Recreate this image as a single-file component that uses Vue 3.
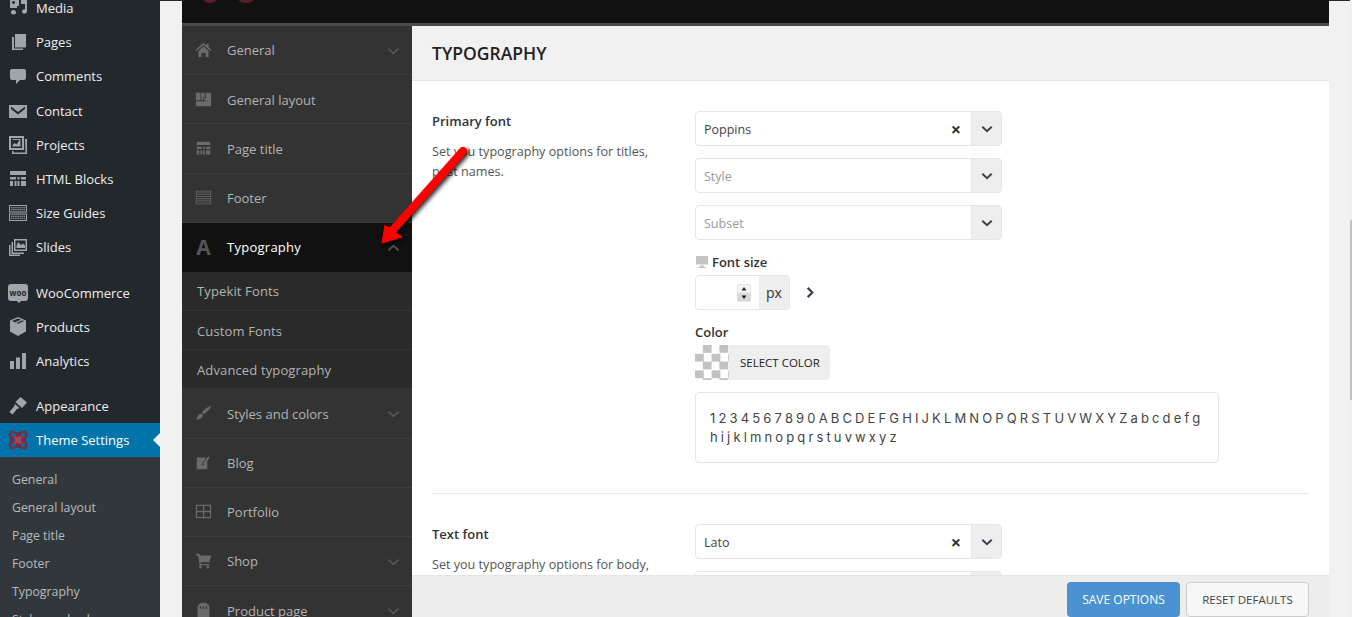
<script setup>
function keys(x, y, n, w, h, gap) {
  let s = ''
  for (let i = 0; i < n; i++) s += `M${x + i * (w + gap)} ${y}h${w}v${h}h-${w}z `
  return s
}
const kb =
  'M1 2h18v7.500H1z M2 3v5.500h16V3z M1 10.500h18V18H1z M2 11.500V17h16v-5.500z ' +
  keys(3, 4.2, 7, 1.500, 1, .6) + keys(3, 6.2, 7, 1.500, 1, .6) +
  keys(3, 12.700, 7, 1.500, 1, .6) + keys(3, 14.700, 7, 1.500, 1, .6)

const blocks = 'M2 2h16v4H2z M2 8h6v2.500H2z M9.500 8h2v2.500h-2z M13 8h5v2.500h-5z M2 12h3v5H2z M6.500 12h2v5h-2z M9.500 12h2v5h-2z M13 12h5v5h-5z'

const wpGroups = [
  [
    { t: 'Media', d: 'M2 1h9v7H9v2H2z M5.500 3a1.500 1.500 0 1 0 .01 0z M13 2h6v11.500a2.500 2.200 0 1 1-2-2.100V6h-4z M5.500 12a2.600 2.300 0 1 1-.01 0z' },
    { t: 'Pages', d: 'M7 2h11v13.500H7z M4 5h2v11.500h9V18H4z' },
    { t: 'Comments', d: 'M4 3h12a2 2 0 0 1 2 2v7a2 2 0 0 1-2 2h-4l-4 4v-4H4a2 2 0 0 1-2-2V5a2 2 0 0 1 2-2z' },
    { t: 'Contact', d: 'M1 4h18v13H1z M3 5.500v2.400l7 5.600 7-5.600V5.500l-7 5.600z' },
    { t: 'Projects', d: 'M1 1h15v14H1z M3 3v10h11V3z M4.500 4h8v7.500h-8v-1.500l2-2 2 1.500 3-4.500h-7z M17 4h2v15H4v-3h1.500v1.500h12z' },
    { t: 'HTML Blocks', d: blocks },
    { t: 'Size Guides', d: kb },
    { t: 'Slides', d: 'M6 2h13v12H6z M7.500 3.500v9h10v-9z M10 5l3 3 2-1.500 2 2v2.500H8.500v-2z M3.500 5H5v10.500h11V17H3.500z M1 8h1.500v9.500H12V19H1z' }
  ],
  [
    { t: 'WooCommerce', woo: true },
    { t: 'Products', d: 'M10 0l8 3.500v11L10 19l-8-4.500v-11z M4 4l6 2.800L16 4l-1.500-.7-6 2.800L7 5.300l6-2.600L10 1.500z' },
    { t: 'Analytics', d: 'M2 10h4v8H2z M8 6.500h4V18H8z M14 2h4v16h-4z' }
  ],
  [
    { t: 'Appearance', d: 'M12.500 1 19 6.500 14 12 7.500 6z M7 8l4.500 4-2.500 1-4.500 5.500L1.500 16 6 10.500z' }
  ]
]

const subMenu = ['General', 'General layout', 'Page title', 'Footer', 'Typography', 'Styles and colors']

const navTop = [
  { t: 'General', chev: true, d: 'M10 1l3.500 3V2h2.500v4.300L20 10h-2.500L10 3.500 2.500 10H0z M4 10.500L10 5l6 5.500V18h-3.500v-5h-5v5H4z' },
  { t: 'General layout', d: 'M1 2h5.500v9H1z M7.500 2h4v5.500H9.500v3.500h-2z M12.500 2H19v16H1v-6h11.500z M10.500 8.500h2V11h-2z' },
  { t: 'Page title', d: blocks },
  { t: 'Footer', d: kb }
]
const navBottom = [
  { t: 'Styles and colors', chev: true, d: 'M19 1c-1 3.500-5 8-8.500 10L8 8.800C10.500 5.500 15.500 2 19 1z M7 10l2.500 2.200C9 15.500 6 17.500 1 17c2-1.200 1.500-5.500 6-7z' },
  { t: 'Blog', d: 'M2 4h11L8.500 11v2H11l3.500-5v10H2z M15.500 2.500l2 1.400-6.500 9-2-1.300z' },
  { t: 'Portfolio', d: 'M1 2h18v16H1z M2.500 3.500v5.700h6.700V3.500z M10.800 3.500v5.700h6.700V3.500z M2.500 10.800v5.700h6.700v-5.700z M10.800 10.800v5.700h6.700v-5.700z' },
  { t: 'Shop', chev: true, d: 'M1 2h4l1 2h13l-2 8H6.500l.5 2h10v1.500H5.500L3.500 4H1z M6.500 16a1.700 1.700 0 1 1-.01 0z M15 16a1.700 1.700 0 1 1-.01 0z' },
  { t: 'Product page', chev: true, d: 'M3 18V6.500C3 3.500 6 1 10 1s7 2.500 7 5.500V18z M6.500 5a.8.8 0 0 0-.8.8V8h1.600V5.800A.8.8 0 0 0 6.500 5z M10 5a.8.8 0 0 0-.8.8V8h1.600V5.800A.8.8 0 0 0 10 5z M13.500 5a.8.8 0 0 0-.8.8V8h1.600V5.800a.8.8 0 0 0-.8-.8z' }
]
const typoSub = ['Typekit Fonts', 'Custom Fonts', 'Advanced typography']
</script>

<template>
  <div class="page">
    <aside class="wp">
      <div v-for="(g, i) in wpGroups" :key="i" class="wp-group">
        <div v-for="it in g" :key="it.t" class="wp-item">
          <span v-if="it.woo" class="woo">woo</span>
          <svg v-else class="wp-ico" viewBox="0 0 20 20"><path fill-rule="evenodd" :d="it.d" /></svg>
          <span>{{ it.t }}</span>
        </div>
      </div>
      <div class="wp-item active">
        <svg class="wp-ico" viewBox="0 0 20 20">
          <g fill="none">
            <ellipse cx="10" cy="10" rx="10.500" ry="4.500" transform="rotate(45 10 10)" stroke="#7c2a3e" stroke-width="2.400" />
            <ellipse cx="10" cy="10" rx="10.500" ry="4.500" transform="rotate(-45 10 10)" stroke="#7c2a3e" stroke-width="2.400" />
          </g>
          <path d="M6.500 6.500 13.500 13.500M13.500 6.500 6.500 13.500" stroke="#c0394a" stroke-width="2.600" />
        </svg>
        <span>Theme Settings</span>
        <i class="notch"></i>
      </div>
      <div class="wp-sub">
        <div v-for="s in subMenu" :key="s" class="wp-sub-item">{{ s }}</div>
      </div>
    </aside>

    <div class="canvas">
      <div class="adminline"></div>
      <div class="panel">
        <div class="panel-top">
          <svg class="logos" width="60" height="3" viewBox="0 0 60 3">
            <path d="M1 0a6 3 0 0 0 12 0z M36 0a7 3 0 0 0 14 0z" fill="#5c1c28" />
          </svg>
        </div>
        <div class="panel-body">
          <nav class="nav">
            <div v-for="n in navTop" :key="n.t" class="nav-row">
              <svg class="nav-ico" viewBox="0 0 20 20"><path fill-rule="evenodd" :d="n.d" /></svg>
              <span>{{ n.t }}</span>
              <svg v-if="n.chev" class="nav-chev" viewBox="0 0 14 8"><path d="M1.500 1.500 7 6.500l5.500-5" /></svg>
            </div>
            <div class="nav-row open">
              <span class="nav-a">A</span>
              <span>Typography</span>
              <svg class="nav-chev" viewBox="0 0 14 8"><path d="M1.500 6.500 7 1.500l5.500 5" /></svg>
            </div>
            <div v-for="s in typoSub" :key="s" class="nav-sub">{{ s }}</div>
            <div v-for="n in navBottom" :key="n.t" class="nav-row">
              <svg class="nav-ico" viewBox="0 0 20 20"><path fill-rule="evenodd" :d="n.d" /></svg>
              <span>{{ n.t }}</span>
              <svg v-if="n.chev" class="nav-chev" viewBox="0 0 14 8"><path d="M1.500 1.500 7 6.500l5.500-5" /></svg>
            </div>
          </nav>

          <main class="main">
            <header class="main-head">Typography</header>
            <div class="scroll">
              <section class="field first">
                <div class="desc">
                  <h4>Primary font</h4>
                  <p>Set you typography options for titles, post names.</p>
                </div>
                <div class="controls">
                  <div class="select">
                    <span class="val">Poppins</span>
                    <span class="clear">×</span>
                    <span class="arrow"><svg viewBox="0 0 14 8"><path d="M1.500 1.500 7 6.500l5.500-5" /></svg></span>
                  </div>
                  <div class="select">
                    <span class="val ph">Style</span>
                    <span class="arrow"><svg viewBox="0 0 14 8"><path d="M1.500 1.500 7 6.500l5.500-5" /></svg></span>
                  </div>
                  <div class="select">
                    <span class="val ph">Subset</span>
                    <span class="arrow"><svg viewBox="0 0 14 8"><path d="M1.500 1.500 7 6.500l5.500-5" /></svg></span>
                  </div>
                  <div class="lbl size-lbl">
                    <svg class="mon" viewBox="0 0 14 14"><path d="M1 1h12v8.500H1z M5 10.500h4V12h2v1H3v-1h2z" fill="#c4c4c4" /></svg>
                    Font size
                  </div>
                  <div class="size-row">
                    <div class="num">
                      <span class="spin">
                        <svg viewBox="0 0 14 18">
                          <rect width="14" height="18" fill="#e4e4e4" />
                          <rect x="1" y="1" width="12" height="7.500" fill="#f4f4f4" />
                          <rect x="1" y="9.500" width="12" height="7.500" fill="#d6d6d6" />
                          <path d="M7 3l2.500 3.500h-5zM7 15l-2.500-3.500h5z" fill="#222" />
                        </svg>
                      </span>
                      <span class="px">px</span>
                    </div>
                    <svg class="more" viewBox="0 0 8 14"><path d="M1.500 2 6.500 7l-5 5" /></svg>
                  </div>
                  <div class="lbl color-lbl">Color</div>
                  <div class="color-btn"><span class="checker"></span><span class="color-t">SELECT COLOR</span></div>
                  <div class="preview">1 2 3 4 5 6 7 8 9 0 A B C D E F G H I J K L M N O P Q R S T U V W X Y Z a b c d e f g h i j k l m n o p q r s t u v w x y z</div>
                </div>
              </section>
              <section class="field">
                <div class="desc">
                  <h4>Text font</h4>
                  <p>Set you typography options for body, paragraphs.</p>
                </div>
                <div class="controls">
                  <div class="select">
                    <span class="val">Lato</span>
                    <span class="clear">×</span>
                    <span class="arrow"><svg viewBox="0 0 14 8"><path d="M1.500 1.500 7 6.500l5.500-5" /></svg></span>
                  </div>
                  <div class="select">
                    <span class="val ph">Style</span>
                    <span class="arrow"><svg viewBox="0 0 14 8"><path d="M1.500 1.500 7 6.500l5.500-5" /></svg></span>
                  </div>
                </div>
              </section>
            </div>
            <footer class="foot">
              <button class="btn save">SAVE OPTIONS</button>
              <button class="btn reset">RESET DEFAULTS</button>
            </footer>
          </main>
        </div>
      </div>
      <svg class="red-arrow" width="110" height="120" viewBox="370 135 110 120">
        <path d="M463 151 391 232" stroke="#f00" stroke-width="8" stroke-linecap="round" fill="none" />
        <path d="M382 243l3-18 17 12z" fill="#f00" stroke="#f00" stroke-linejoin="round" />
      </svg>
    </div>
    <div class="sb"><i></i></div>
  </div>
</template>

<style>
html, body { margin: 0; overflow: hidden; background: #f1f1f1; }
</style>

<style scoped>
.page {
  display: flex;
  width: 1352px;
  height: 617px;
  overflow: hidden;
  background: #f1f1f1;
  font-family: "Open Sans", "Noto Sans", sans-serif;
  font-size: 13px;
  color: #444;
}
.wp {
  flex: 0 0 160px;
  background: #23282d;
  color: #eee;
  margin-top: -9px;
  height: 626px;
  overflow: hidden;
}
.wp-group { padding-bottom: 11px; }
.wp-group:nth-of-type(3) { padding-bottom: 0; }
.wp-item {
  position: relative;
  display: flex;
  align-items: center;
  height: 34.200px;
  padding-left: 8px;
  gap: 8px;
  font-size: 13px;
}
.wp-ico { width: 20px; height: 20px; fill: #a0a5aa; flex: none; }
.woo {
  position: relative;
  width: 20px;
  height: 17px;
  border-radius: 3px;
  background: #a0a5aa;
  color: #23282d;
  font-size: 8px;
  font-weight: 700;
  text-align: center;
  line-height: 17px;
  flex: none;
}
.woo::after {
  content: "";
  position: absolute;
  left: 9px;
  top: 17px;
  border: 2px solid transparent;
  border-top-color: #a0a5aa;
}
.active { background: #0073aa; color: #fff; }
.notch {
  position: absolute;
  right: 0;
  top: 10px;
  border: 7px solid transparent;
  border-left-width: 0;
  border-right-color: #f1f1f1;
  width: 0;
  height: 0;
}
.wp-sub { background: #32373c; padding-top: 9px; height: 200px; }
.wp-sub-item {
  height: 28px;
  line-height: 28px;
  padding-left: 12px;
  font-size: 12.300px;
  color: rgba(240, 245, 250, .7);
}

.canvas { position: relative; flex: 1; padding: 0 21px 0 22px; min-width: 0; }
.adminline { position: absolute; left: 0; right: 0; top: 0; height: 1px; background: #23282d; }
.panel { width: 1147px; height: 617px; display: flex; flex-direction: column; }
.panel-top {
  height: 23px;
  background: #111;
  border-bottom: 3px solid #4a4a4a;
  flex: none;
  position: relative;
}
.logos { position: absolute; left: 21px; top: 0; }
.panel-body { display: flex; flex: 1; min-height: 0; }
.nav { flex: 0 0 230px; background: #333; overflow: hidden; color: #b4b4b4; font-size: 13px; }
.nav-row {
  display: flex;
  align-items: center;
  height: 48.200px;
  border-bottom: 1px solid #3d3d3d;
  padding-left: 13px;
  position: relative;
}
.nav-row > span:not(.nav-a) { margin-left: 15px; padding-top: 1px; }
.nav-row:first-child > span { padding-top: 0; }
.nav-ico { width: 17px; height: 17px; fill: #6a6a6a; flex: none; }
.nav-a { width: 17px; font-size: 21px; font-weight: 700; color: #555; text-align: center; flex: none; line-height: 1; }
.nav-chev {
  position: absolute;
  right: 12px;
  top: 21px;
  width: 13px;
  height: 8px;
  fill: none;
  stroke: #555;
  stroke-width: 2;
}
.open { background: #111; color: #fff; border-bottom: 0; height: 49px; }
.open > span:not(.nav-a) { padding-top: 0; letter-spacing: .02em; }
.nav-sub {
  height: 38.200px;
  line-height: 40px;
  padding-left: 15px;
  background: #2a2a2a;
  border-bottom: 1px solid #333;
  color: #b4b4b4;
  letter-spacing: .01em;
}
.open + .nav-sub { line-height: 38px; }

.main { flex: 1; display: flex; flex-direction: column; background: #fff; min-width: 0; }
.main-head {
  flex: none;
  height: 54px;
  line-height: 54px;
  padding-left: 20px;
  background: #f1f1f1;
  border-bottom: 1px solid #e5e5e5;
  font-size: 17.500px;
  font-weight: 600;
  text-transform: uppercase;
  color: #222;
}
.scroll { flex: 1; min-height: 0; overflow: hidden; padding: 0 21px 0 20px; }
.field { display: flex; padding-top: 30px; }
.first { padding-bottom: 30px; border-bottom: 1px solid #e6e6e6; }
.desc { flex: 0 0 263px; }
.desc h4 { margin: 0; font-size: 13px; font-weight: 600; color: #333; line-height: 20px; }
.desc p { margin: 11px 0 0; width: 225px; font-size: 12.600px; line-height: 20px; color: #555; }
.controls { flex: 1; }
.select {
  display: flex;
  align-items: center;
  box-sizing: border-box;
  width: 307px;
  height: 35px;
  margin-bottom: 12px;
  border: 1px solid #e6e6e6;
  border-radius: 4px;
  padding-left: 8px;
  color: #444;
  font-size: 12.500px;
}
.val { flex: 1; padding-top: 2px; }
.ph { color: #999; }
.clear { font-size: 18px; font-weight: 700; color: #333; margin-right: 10px; line-height: 1; }
.arrow {
  display: flex;
  align-items: center;
  justify-content: center;
  align-self: stretch;
  width: 29px;
  background: #eee;
  border-left: 1px solid #e6e6e6;
}
.arrow svg { width: 12px; height: 8px; fill: none; stroke: #3c434a; stroke-width: 2.400; }
.lbl { font-size: 13px; font-weight: 600; color: #333; line-height: 18px; }
.size-lbl { display: flex; align-items: center; gap: 3px; padding-top: 1px; }
.mon { width: 14px; height: 14px; }
.size-row { display: flex; align-items: center; margin-top: 4px; }
.num {
  box-sizing: border-box;
  display: flex;
  width: 95px;
  height: 35px;
  border: 1px solid #e6e6e6;
  border-radius: 4px;
  overflow: hidden;
  justify-content: flex-end;
  align-items: center;
}
.spin { display: flex; margin-right: 8px; }
.spin svg { width: 14px; height: 18px; }
.px {
  align-self: stretch;
  display: flex;
  align-items: center;
  justify-content: center;
  width: 30px;
  background: #eee;
  font-size: 14px;
  color: #333;
}
.more { width: 8px; height: 13px; margin-left: 16px; fill: none; stroke: #3c434a; stroke-width: 2.400; }
.color-lbl { margin-top: 13px; }
.color-btn {
  display: flex;
  align-items: center;
  width: 135px;
  height: 35px;
  margin-top: 4px;
  border-radius: 4px;
  background: #eee;
  overflow: hidden;
}
.checker {
  width: 34px;
  align-self: stretch;
  background: repeating-conic-gradient(#c2c2c2 0 25%, #fff 0 50%) 0 0 / 16.600px 16.600px;
}
.color-t { margin-left: 11px; font-size: 11.500px; color: #222; }
.preview {
  box-sizing: border-box;
  width: 524px;
  height: 71px;
  margin-top: 12px;
  padding: 16px 14px;
  border: 1px solid #e6e6e6;
  border-radius: 4px;
  font-family: Inter, sans-serif;
  font-size: 13px;
  line-height: 19px;
  letter-spacing: .44px;
  word-spacing: -1.400px;
  color: #444;
}
.foot {
  flex: none;
  height: 42px;
  box-sizing: border-box;
  border-top: 1px solid #e5e5e5;
  background: #ededed;
  display: flex;
  justify-content: flex-end;
  gap: 6px;
  padding: 6px 20px 0 0;
}
.btn {
  height: 35px;
  border-radius: 4px;
  font-family: inherit;
  font-size: 11.500px;
  padding: 0;
}
.save { width: 113px; background: #4b92d3; border: 0; color: #fff; font-size: 12px; }
.reset { width: 123px; background: #f7f7f7; border: 1px solid #ccc; color: #444; }
.red-arrow {
  position: absolute;
  left: 210px;
  top: 135px;
  overflow: visible;
  filter: drop-shadow(2px 2px 2px rgba(0, 0, 0, .85));
}
.sb { position: absolute; left: 1350px; top: 0; width: 2px; height: 617px; background: #efefef; }
.sb i { position: absolute; left: 0; top: 220px; width: 2px; height: 180px; background: #c1c1c1; }
</style>
